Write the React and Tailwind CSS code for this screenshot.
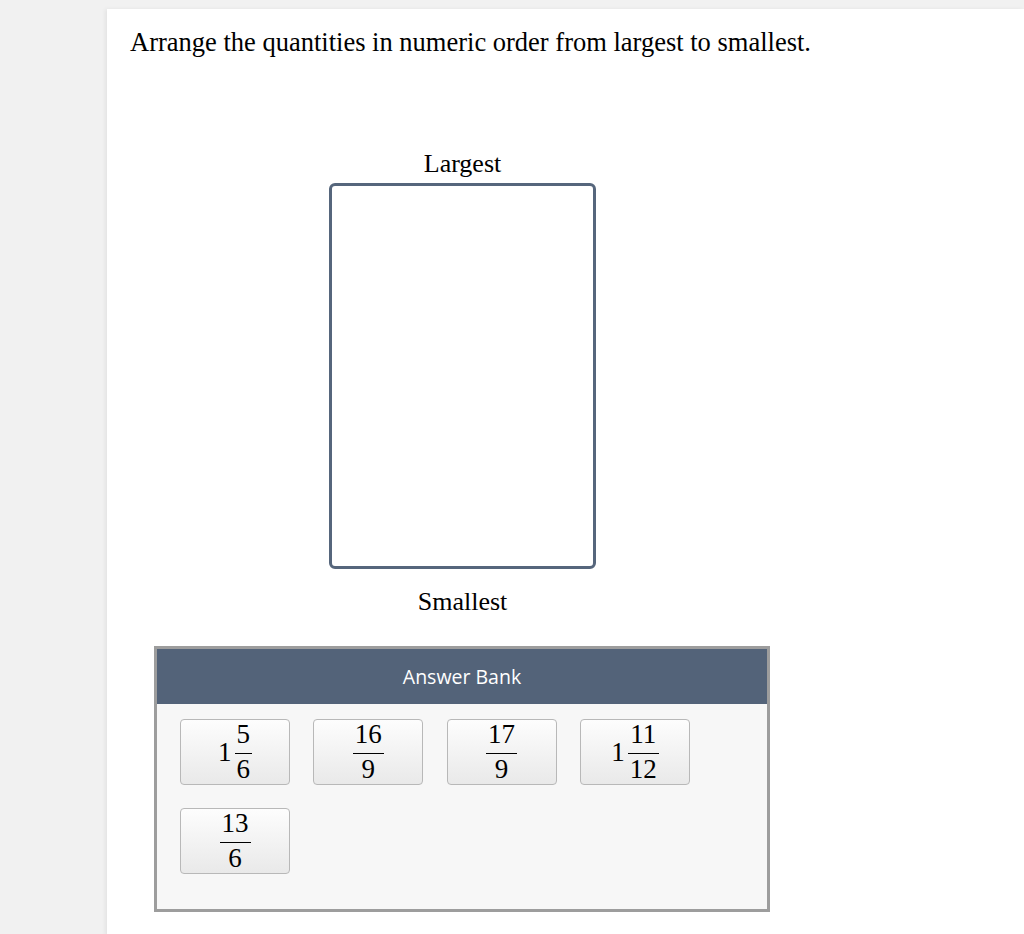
import React from 'react';

const serif = { fontFamily: '"Liberation Serif", "Times New Roman", serif' };

// stacked fraction with a bar, optional whole part in front
const Fraction = ({ whole, num, den }) => (
  <div className="flex items-center gap-[3px] text-[27px] text-black" style={serif}>
    {whole && <span className="leading-[27px]">{whole}</span>}
    <div className="flex flex-col items-stretch">
      <span className="leading-[27px] text-center px-[2px] pb-[5px]">{num}</span>
      <span className="h-px bg-black" />
      <span className="leading-[27px] text-center px-[2px] pt-[2px]">{den}</span>
    </div>
  </div>
);

const Tile = ({ item }) => (
  <div className="w-[110px] h-[66px] flex items-center justify-center rounded-[4px] border border-[#b8b8b8] bg-gradient-to-b from-[#fdfdfd] to-[#e9e9e9] cursor-grab select-none">
    <Fraction {...item} />
  </div>
);

const bank = [
  { whole: '1', num: '5', den: '6' },
  { num: '16', den: '9' },
  { num: '17', den: '9' },
  { whole: '1', num: '11', den: '12' },
  { num: '13', den: '6' },
];

export default function App() {
  return (
    <div className="min-h-screen bg-[#f1f1f1] pt-[9px] flex flex-col">
      <div className="flex-1 ml-[107px] bg-white shadow-[-2px_0_4px_rgba(0,0,0,0.06)] pt-[18px] pb-[24px] flex flex-col">
        <h1 className="pl-[23px] text-[26.5px] leading-[30px] text-black font-normal" style={serif}>
          Arrange the quantities in numeric order from largest to smallest.
        </h1>

        <div className="ml-[222px] w-[267px] mt-[92px] flex flex-col items-center" style={serif}>
          <div className="text-[26px] leading-[30px] text-black">Largest</div>
          <div className="mt-[4px] w-[267px] h-[386px] rounded-[6px] border-[3px] border-[#56667c] bg-white" />
          <div className="mt-[18px] text-[26px] leading-[30px] text-black">Smallest</div>
        </div>

        <div className="ml-[47px] mt-[29px] w-[616px] border-[3px] border-[#9d9d9d] bg-[#f7f7f7]">
          <div
            className="h-[55px] bg-[#536379] flex items-center justify-center text-white text-[19.5px]"
            style={{ fontFamily: '"Open Sans", "Noto Sans", sans-serif' }}
          >
            Answer Bank
          </div>
          <div className="pl-[23px] pt-[15px] pb-[35px] flex flex-wrap gap-x-[23.3px] gap-y-[23px]">
            {bank.map((item, i) => (
              <Tile key={i} item={item} />
            ))}
          </div>
        </div>
      </div>
    </div>
  );
}
